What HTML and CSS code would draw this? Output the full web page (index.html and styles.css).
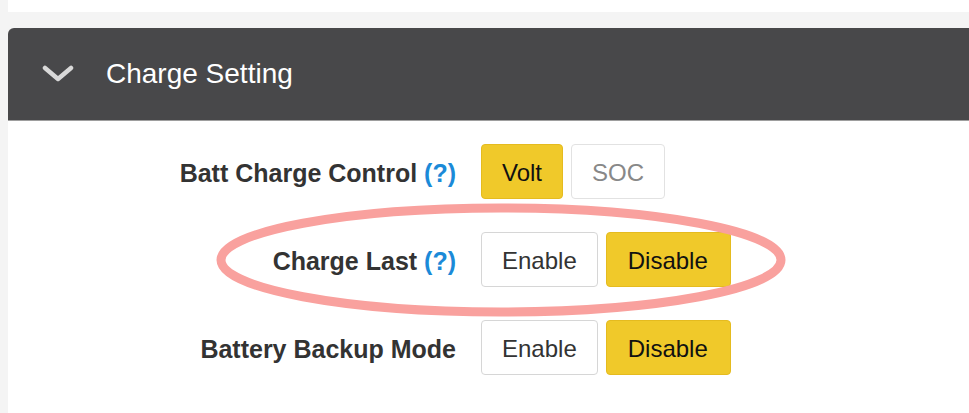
FILE: index.html
```html
<!DOCTYPE html>
<html lang="en">
<head>
    <meta charset="UTF-8">
    <meta name="viewport" content="width=device-width, initial-scale=1.0">
    <title>Charge Setting</title>
    <link rel="stylesheet" href="styles.css">
</head>
<body>
    <div class="top-card"></div>

    <div class="panel">
        <div class="panel-head">
            <svg class="chevron" width="32" height="18" viewBox="0 0 32 18">
                <polyline points="3,3 16,14 29,3" fill="none" stroke="#d9d9d9" stroke-width="4.5" stroke-linecap="round" stroke-linejoin="round"/>
            </svg>
            <div class="panel-title">Charge Setting</div>
        </div>

        <div class="panel-body">
            <div class="row">
                <div class="label">Batt Charge Control <span class="help">(?)</span></div>
                <div class="btn-group">
                    <div class="btn active">Volt</div>
                    <div class="btn muted">SOC</div>
                </div>
            </div>
            <div class="row">
                <div class="label">Charge Last <span class="help">(?)</span></div>
                <div class="btn-group">
                    <div class="btn">Enable</div>
                    <div class="btn active">Disable</div>
                </div>
            </div>
            <div class="row">
                <div class="label">Battery Backup Mode</div>
                <div class="btn-group">
                    <div class="btn">Enable</div>
                    <div class="btn active">Disable</div>
                </div>
            </div>

            <!-- annotation circle round the "Charge Last" row -->
            <svg class="mark" width="600" height="130" viewBox="0 0 600 130">
                <ellipse cx="292" cy="63" rx="280" ry="52" fill="none" stroke="#f9a19e" stroke-width="9"/>
            </svg>
        </div>
    </div>
</body>
</html>
```

FILE: styles.css
```css
body {
    margin: 0;
    padding-left: 8px;
    background-color: #f4f4f4;
    font-family: 'Liberation Sans', Arial, sans-serif;
    color: #333;
    overflow: hidden;
}

.top-card {
    height: 12px;
    background-color: #fff;
}

.panel {
    margin-top: 16px;
}

.panel-head {
    display: flex;
    align-items: center;
    height: 92px;
    padding-left: 34px;
    background-color: #48484a;
    border-top-left-radius: 6px;
    border-bottom: 1px solid #9e9e9e;
}

.panel-head .chevron {
    display: block;
}

.panel-title {
    margin-left: 32px;
    font-size: 28px;
    color: #fff;
}

.panel-body {
    position: relative;
    background-color: #fff;
    padding-top: 23px;
    padding-bottom: 10px;
}

.row {
    display: flex;
    align-items: center;
    height: 55px;
    margin-bottom: 33px;
}

.label {
    width: 448px;
    margin-right: 25px;
    padding-top: 3px;
    text-align: right;
    font-size: 25px;
    font-weight: bold;
    color: #333;
}

.help {
    color: #1b8ad8;
}

.btn-group {
    display: flex;
    gap: 8px;
}

.btn {
    height: 51px;
    line-height: 51px;
    padding: 2px 20px 0;
    font-size: 24px;
    color: #333;
    background-color: #fff;
    border: 1px solid #d6d6d6;
    border-radius: 4px;
}

.btn.active {
    color: #111;
    background-color: #f0c92a;
    border-color: #e5bb1f;
}

.btn.active:last-child {
    padding: 2px 22px 0 21px;
}

.btn.muted {
    color: #888;
    border-color: #e2e2e2;
}

.mark {
    position: absolute;
    left: 201px;
    top: 76px;
    pointer-events: none;
}
```
